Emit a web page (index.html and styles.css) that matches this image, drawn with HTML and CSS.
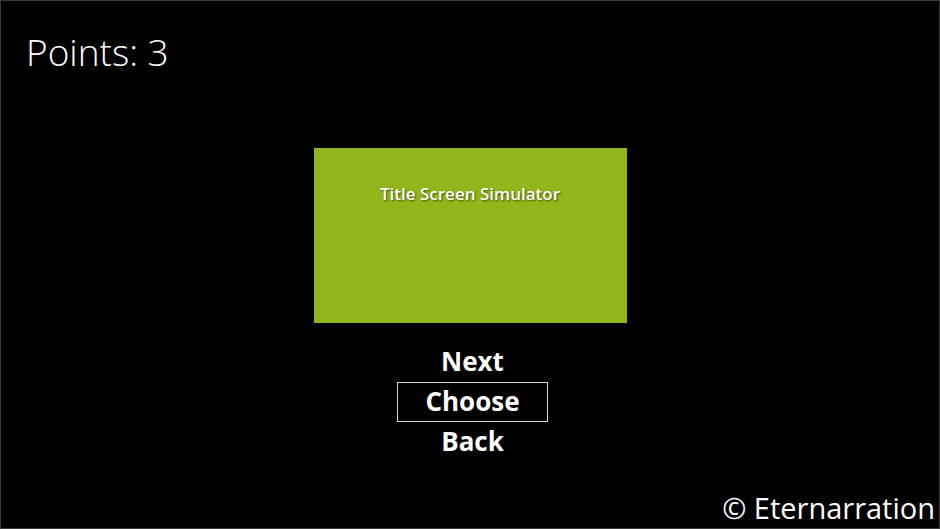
FILE: index.html
```html
<!DOCTYPE html>
<html lang="en">
<head>
    <meta charset="UTF-8">
    <title>Title Screen Simulator</title>
    <link rel="stylesheet" href="styles.css">
</head>
<body>
<div class="screen">
    <div class="points">Points: 3</div>
    <div class="stage">
        <div class="preview">
            <div class="preview-title">Title Screen Simulator</div>
        </div>
        <div class="menu">
            <div class="menu-item">Next</div>
            <div class="menu-item selected">Choose</div>
            <div class="menu-item">Back</div>
        </div>
    </div>
    <div class="credit">&copy; Eternarration</div>
</div>
</body>
</html>
```

FILE: styles.css
```css
html{
    height: 100%;
}
body{
    height: 100%;
    margin: 0;
    padding: 0;
    background-color: #000;
    font-family: "Open Sans", "Noto Sans", sans-serif;
    color: #fff;
}
.screen{
    display: flex;
    flex-direction: column;
    box-sizing: border-box;
    width: 940px;
    height: 529px;
    border: 1px solid #3a3a3a;
    background-color: #000;
}
.points{
    padding: 28px 0 0 25px;
    font-size: 37px;
    font-weight: 300;
    line-height: 46px;
}
.stage{
    display: flex;
    flex-direction: column;
    align-items: center;
    margin-top: 73px;
}
.preview{
    box-sizing: border-box;
    width: 313px;
    height: 175px;
    padding-top: 34px;
    background-color: #92b51b;
    text-align: center;
}
.preview-title{
    font-size: 17px;
    font-weight: 600;
    line-height: 24px;
    text-shadow: 1px 1px 2px rgba(0, 0, 0, 0.55);
}
.menu{
    display: flex;
    flex-direction: column;
    align-items: center;
    margin: 19px 0 0 5px;
}
.menu-item{
    box-sizing: border-box;
    width: 151px;
    height: 40px;
    font-size: 26px;
    font-weight: 700;
    line-height: 37px;
    text-align: center;
    border: 1px solid transparent;
}
.selected{
    border-color: #d8d8d8;
}
.credit{
    margin-top: auto;
    padding: 0 4px 0 0;
    align-self: flex-end;
    font-size: 29px;
    font-weight: 400;
    line-height: 40px;
}
```
